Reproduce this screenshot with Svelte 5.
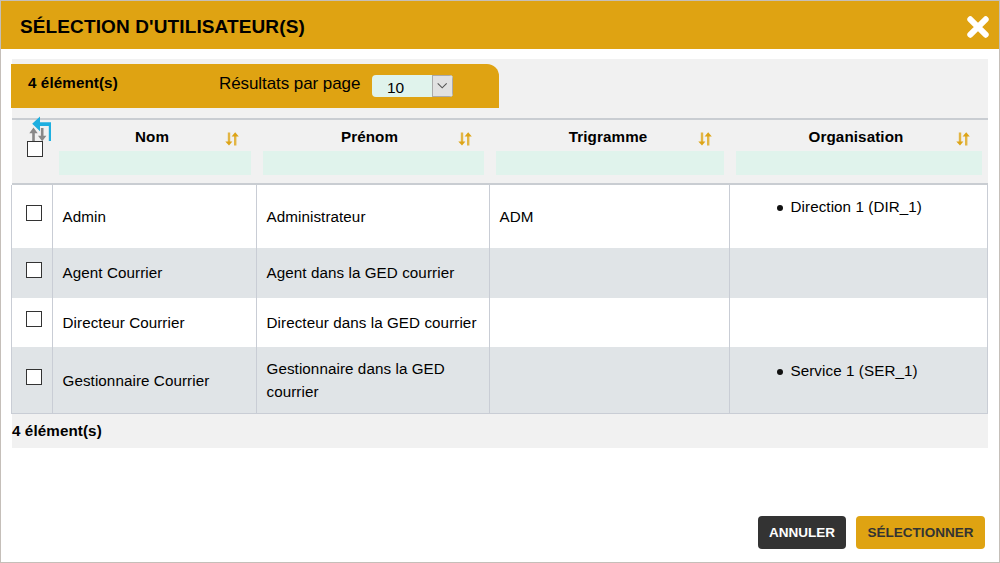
<script>
  const columns = [
    { label: 'Nom', shift: -3 },
    { label: 'Prénom', shift: -4 },
    { label: 'Trigramme', shift: -2 },
    { label: 'Organisation', shift: -3 }
  ];
  const rows = [
    { nom: 'Admin', prenom: 'Administrateur', tri: 'ADM', org: 'Direction 1 (DIR_1)' },
    { nom: 'Agent Courrier', prenom: 'Agent dans la GED courrier', tri: '', org: '' },
    { nom: 'Directeur Courrier', prenom: 'Directeur dans la GED courrier', tri: '', org: '' },
    { nom: 'Gestionnaire Courrier', prenom: 'Gestionnaire dans la GED courrier', tri: '', org: 'Service 1 (SER_1)' }
  ];
</script>

<div class="dialog">
  <header>
    <h1>SÉLECTION D'UTILISATEUR(S)</h1>
    <svg class="close" width="24" height="24" viewBox="0 0 24 24"><path d="M4.3 4.3 19.7 19.7M19.7 4.3 4.3 19.7" stroke="#fff" stroke-width="6" stroke-linecap="round" /></svg>
  </header>

  <main>
    <div class="toolbar">
      <b class="count">4 élément(s)</b>
      <span class="perpage">Résultats par page</span>
      <div class="select">
        <span>10</span>
        <i><svg width="20" height="21" viewBox="0 0 20 21"><path d="M5.7 8.3 10.2 12.8 14.7 8.3" fill="none" stroke="#555" stroke-width="1.1" /></svg></i>
      </div>
    </div>

    <div class="grid thead">
      <div class="th pick">
        <svg class="invert" width="24" height="26" viewBox="0 0 24 26">
          <path d="M6.5 24V14M15.2 11v9" stroke="#888" stroke-width="2.6" fill="none" />
          <path d="M2.3 16.2 6.5 10.5l4.2 5.7zM11 18.8h8.4l-4.2 5.4z" fill="#888" />
          <path d="M5.2 6.8 13 -.4V5.2H24V24H21.8V9H13V14.2z" fill="#1eafe0" />
        </svg>
        <span class="box"></span>
      </div>
      {#each columns as c}
        <div class="th">
          <div class="label">
            <b style="left:{c.shift}px">{c.label}</b>
            <svg class="sort" width="14" height="14" viewBox="0 0 14 14">
              <path d="M4 .5v10M10.2 3.5v10" stroke="#e2b544" stroke-width="2.4" fill="none" />
              <path d="M.3 9.4h7.1L4 13.6zM6.6 4.6h7.2L10.2.3z" fill="#dda416" />
            </svg>
          </div>
          <div class="filter"></div>
        </div>
      {/each}
    </div>

    <div class="tbody">
      {#each rows as r}
        <div class="grid row">
          <div class="td pick"><span class="box"></span></div>
          <div class="td">{r.nom}</div>
          <div class="td">{r.prenom}</div>
          <div class="td">{r.tri}</div>
          <div class="td org">{#if r.org}<ul><li>{r.org}</li></ul>{/if}</div>
        </div>
      {/each}
    </div>
    <div class="tfoot">4 élément(s)</div>
  </main>

  <footer>
    <button class="dark">ANNULER</button>
    <button class="gold">SÉLECTIONNER</button>
  </footer>
</div>

<style>
  :global(body) { margin: 0; background: #fff; }
  .dialog, .dialog * { box-sizing: border-box; }
  .dialog {
    width: 1000px; height: 563px; border: 1px solid #c5bfb9; background: #fff; color: #000;
    font: 15.2px/23px "Liberation Sans", Arial, sans-serif;
    display: flex; flex-direction: column;
  }
  header {
    height: 48px; flex: none; background: #dfa312; display: flex; align-items: center;
    justify-content: space-between; padding: 4px 9px 0 19px;
  }
  h1 { margin: 0; font-size: 19px; line-height: 24px; letter-spacing: .12px; white-space: nowrap; }
  .close { display: block; }
  main {
    width: 977px; margin: 10px 0 0 10px; height: 389px; flex: none;
    background: linear-gradient(90deg, #fff 1px, #f1f1f1 1px); padding-top: 5px;
  }
  .toolbar {
    width: 488px; height: 44px; background: #dfa312; border-radius: 0 12px 0 0;
    display: flex; align-items: flex-start; padding-left: 17px;
  }
  .count { width: 191px; line-height: 38px; letter-spacing: .1px; }
  .perpage { width: 153px; font-size: 17px; line-height: 39px; white-space: nowrap; letter-spacing: -.08px; }
  .select {
    margin-top: 11px; width: 81px; height: 22px; border-radius: 4px; overflow: hidden;
    background: #e0f3ec; display: flex; justify-content: space-between;
  }
  .select span { padding-left: 15px; line-height: 26px; font-size: 15.5px; }
  .select i { width: 21px; height: 22px; border: 1px solid #aaa; background: #e1e1e1; }
  .select svg { display: block; margin: -1px 0 0 -1px; }
  .grid { display: grid; }
  .thead {
    margin: 10px 0 0 1px; width: 976px; height: 67px; grid-template-columns: 40px 204px 233px 240px 258px;
    border-top: 2px solid #c9cdd2; border-bottom: 2px solid #c9cdd2;
  }
  .th { padding: 7px 5px 0 7px; }
  .label { height: 24px; display: flex; justify-content: center; position: relative; }
  .label b { position: relative; line-height: 20px; letter-spacing: .1px; }
  .sort { position: absolute; right: 12px; top: 5px; }
  .filter { height: 24px; background: #e0f3ec; }
  .th.pick { padding: 21px 0 0 15px; position: relative; }
  .invert { position: absolute; left: 15px; top: -3px; overflow: visible; }
  .box { display: block; width: 16px; height: 16px; border: 1px solid #333; background: #fff; position: relative; }
  .tbody { border: 1px solid #c9cdd5; border-top: 0; background: #fff; width: 977px; }
  .row { grid-template-columns: 40px 204px 233px 240px 258px; height: 50px; }
  .row:first-child { height: 63px; }
  .row:nth-child(3) { height: 49px; }
  .row:last-child { height: 66px; }
  .row:nth-child(even) { background: #e0e4e7; }
  .td { display: flex; align-items: center; padding: 0 8px 0 9.5px; letter-spacing: .08px; }
  .row:nth-child(2) .td:not(.pick) { padding-bottom: 1px; }
  .td:not(.pick) { border-left: 1px solid #c9cdd5; }
  .td.pick { padding: 0 0 6px 14px; }
  .row:nth-child(odd) .td.pick { padding-bottom: 8px; }
  .td.org { align-items: flex-start; }
  ul { margin: 10px 0 0; padding-left: 36px; list-style: none; }
  li { display: flex; align-items: center; gap: 8px; padding-left: 1px; }
  li::before { content: ""; width: 6px; height: 6px; border-radius: 50%; background: #111; margin-top: 2px; }
  .row:last-child ul { margin-top: 12px; }
  .tfoot { padding: 5px 0 0 1px; font-weight: bold; letter-spacing: .1px; }
  footer { display: flex; justify-content: flex-end; gap: 10px; margin-top: 68px; padding-right: 14px; }
  button {
    height: 33px; border: 0; border-radius: 4px; padding: 0;
    font: bold 13.5px/33px "Liberation Sans", Arial, sans-serif;
  }
  .dark { width: 88px; background: #333; color: #fff; }
  .gold { width: 129px; background: #dfa312; color: #333; letter-spacing: .04px; }
</style>
